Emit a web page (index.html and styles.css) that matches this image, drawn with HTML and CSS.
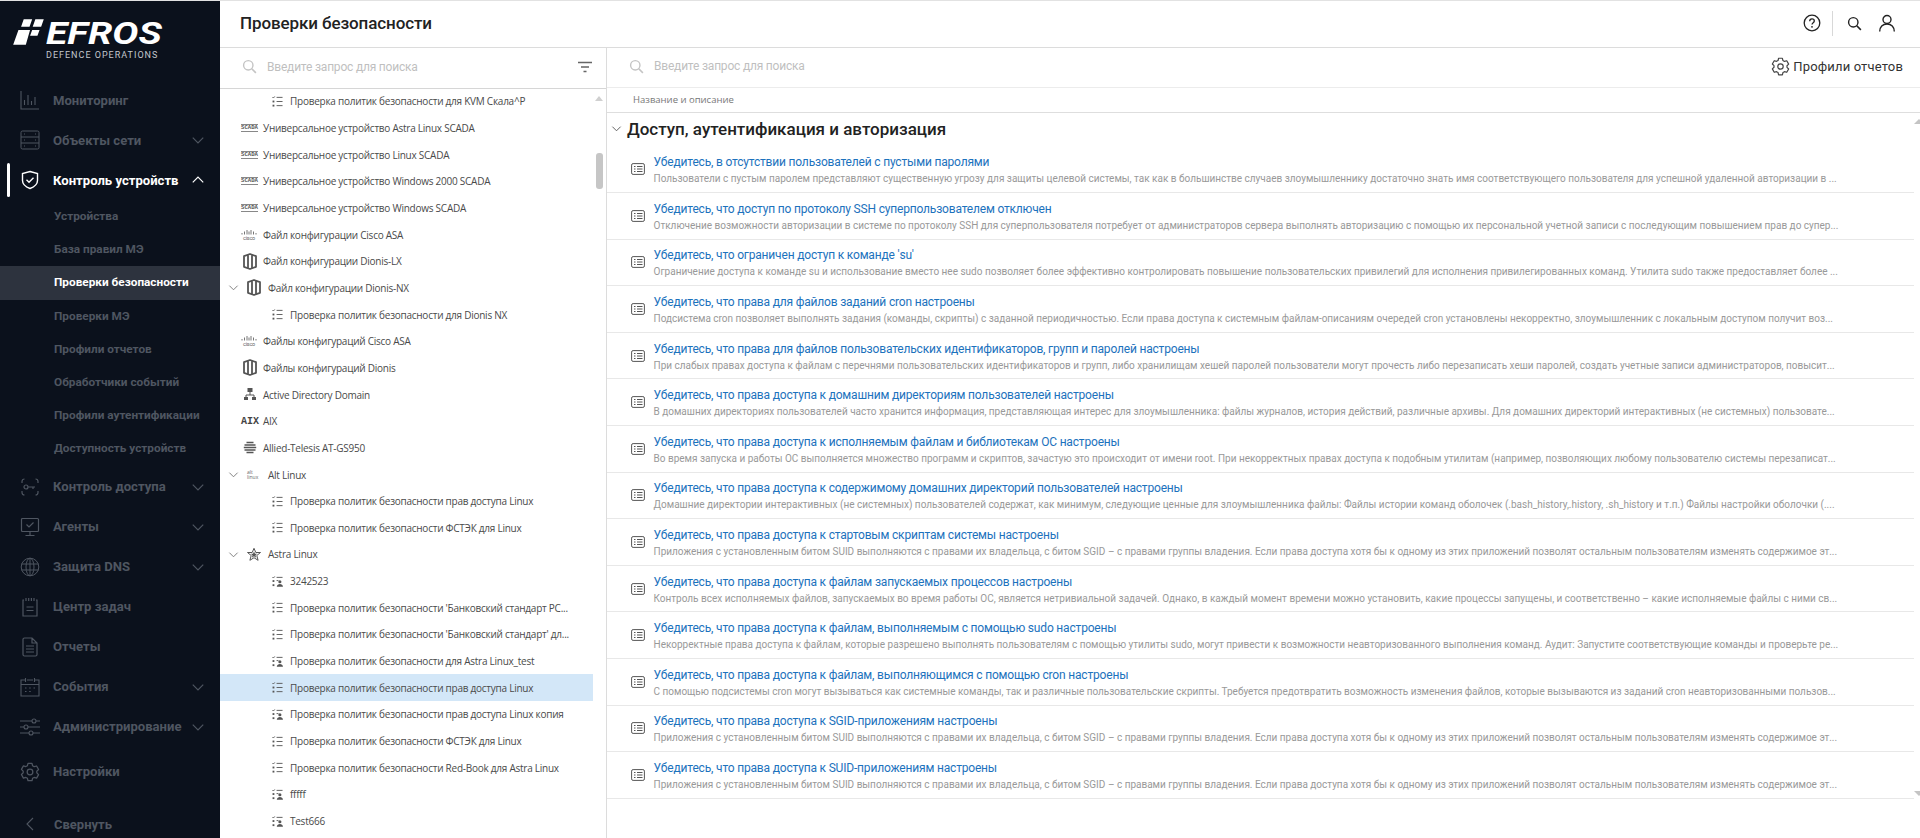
FILE: index.html
```html
<!DOCTYPE html>
<html lang="ru">
<head>
    <meta charset="UTF-8">
    <title>Проверки безопасности</title>
    <link rel="stylesheet" href="styles.css">
</head>
<body>
    <svg class="sprite" xmlns="http://www.w3.org/2000/svg">
        <symbol id="chev-down" viewBox="0 0 12 12"><path d="M1.5 4 6 8.5 10.5 4" fill="none" stroke="currentColor" stroke-width="1"/></symbol>
        <symbol id="list" viewBox="0 0 12 12"><g fill="none" stroke="currentColor" stroke-width="1"><path d="M5 1.5h6.5M5 6h6.5M5 10.5h6.5"/><path d="M.5 1.2 1.5 2.2 3 .5"/></g><rect x=".6" y="5" width="2" height="2" fill="currentColor"/><rect x=".6" y="9.5" width="2" height="2" fill="currentColor"/></symbol>
        <symbol id="list-user" viewBox="0 0 12 12"><g fill="none" stroke="currentColor" stroke-width="1"><path d="M5 1.5h6.5M5 5h2"/><path d="M.5 1.2 1.5 2.2 3 .5"/></g><rect x=".6" y="4.5" width="2" height="2" fill="currentColor"/><rect x=".6" y="9" width="2" height="2" fill="currentColor"/><circle cx="8.6" cy="6.3" r="1.7" fill="currentColor"/><path d="M5.2 11.8c.3-2.4 1.6-3.2 3.4-3.2s3.1.8 3.4 3.2z" fill="currentColor"/></symbol>
        <symbol id="dionis" viewBox="0 0 14 17"><path d="M1 3.2 7 1l6 2.200v10.600L7 16l-6-2.200zM5 2v13M9 2v13" fill="none" stroke="currentColor" stroke-width="1.800" stroke-linejoin="round"/></symbol>
        <symbol id="cisco" viewBox="0 0 16 12"><path d="M1 4v1.500M3.500 2.500v3M6 1v4.500M8 2.500v3M10 1v4.500M12.500 2.500v3M15 4v1.500" stroke="currentColor" stroke-width=".9"/><text x="8" y="11" text-anchor="middle" font-size="5.5" fill="currentColor" font-family="Roboto, sans-serif">cisco</text></symbol>
        <symbol id="doc-row" viewBox="0 0 14 14"><rect x=".6" y="1.6" width="12.8" height="10.8" rx="1.5" fill="none" stroke="currentColor"/><path d="M3 4.500h1.500M3 7h1.500M3 9.500h1.500M6 4.500h5.500M6 7h5.500M6 9.500h5.500" stroke="currentColor"/></symbol>
        <symbol id="search" viewBox="0 0 16 16"><circle cx="6.7" cy="6.7" r="5" fill="none" stroke="currentColor" stroke-width="1.5"/><path d="m10.4 10.4 4.4 4.4" stroke="currentColor" stroke-width="1.7"/></symbol>
        <symbol id="gear" viewBox="0 0 24 24"><g fill="none" stroke="currentColor" stroke-width="1.5" stroke-linejoin="round"><path d="M9.600 2.600h4.800l.7 2.900 1.900 1.100 2.900-.8 2.400 4.200-2.100 2v2.100l2.100 2-2.400 4.200-2.900-.8-1.900 1.100-.7 2.900H9.600l-.7-2.900-1.900-1.100-2.900.8L1.700 16l2.100-2v-2.100l-2.100-2 2.400-4.200 2.900.8 1.900-1.100z" transform="translate(0 -1)"/><circle cx="12" cy="12" r="3.400"/></g></symbol>
    </svg>

    <aside class="sidebar">
        <div class="logo">
            <svg class="logo-mark" viewBox="0 0 36 28"><path d="M3 26 8 12h11l-4 14zM13 2h8l-2.500 7h-8zM24 2h8l-2.500 7h-8zM21 12h7l-2 5.500h-7z" fill="#fff"/></svg>
            <div class="logo-name">EFROS</div>
            <div class="logo-sub">DEFENCE OPERATIONS</div>
        </div>
        <nav class="nav">
            <div class="nav-item">
                <svg class="nav-icon" viewBox="0 0 20 20"><path d="M1 1v18h18M4.500 15V10M8 15V5M11.500 15v-4M15 15V7" fill="none" stroke="currentColor" stroke-width="1.100"/></svg>
                <span>Мониторинг</span>
            </div>
            <div class="nav-item">
                <svg class="nav-icon" viewBox="0 0 20 20"><rect x="1" y="1" width="18" height="18" rx="1.500" fill="none" stroke="currentColor"/><path d="M1 7h18M1 13h18M4 4h1M15 4h1M4 10h1M15 10h1M4 16h1M15 16h1" stroke="currentColor"/></svg>
                <span>Объекты сети</span>
                <svg class="nav-chev"><use href="#chev-down"/></svg>
            </div>
            <div class="nav-item active">
                <svg class="nav-icon" viewBox="0 0 20 20"><path d="M10 1.500 17.500 3.500v7c0 4-3.500 6.500-7.500 8-4-1.500-7.500-4-7.500-8v-7z" fill="none" stroke="currentColor" stroke-width="1.400"/><path d="m6.500 9.800 2.500 2.400 4.500-4.400" fill="none" stroke="currentColor" stroke-width="1.400"/></svg>
                <span>Контроль устройств</span>
                <svg class="nav-chev flip"><use href="#chev-down"/></svg>
            </div>
            <div class="sub-list">
                <div class="sub-item">Устройства</div>
                <div class="sub-item">База правил МЭ</div>
                <div class="sub-item current">Проверки безопасности</div>
                <div class="sub-item">Проверки МЭ</div>
                <div class="sub-item">Профили отчетов</div>
                <div class="sub-item">Обработчики событий</div>
                <div class="sub-item">Профили аутентификации</div>
                <div class="sub-item">Доступность устройств</div>
            </div>
            <div class="nav-item">
                <svg class="nav-icon" viewBox="0 0 20 20"><path d="M2 6V4.500A2.500 2.500 0 0 1 4.500 2M15.500 2A2.500 2.500 0 0 1 18 4.500V6M18 14v1.500a2.500 2.500 0 0 1-2.500 2.500M4.500 18A2.500 2.500 0 0 1 2 15.500V14M8.200 10H15M13 10v2" fill="none" stroke="currentColor" stroke-width="1.200"/><circle cx="6" cy="10" r="2" fill="none" stroke="currentColor" stroke-width="1.200"/></svg>
                <span>Контроль доступа</span>
                <svg class="nav-chev"><use href="#chev-down"/></svg>
            </div>
            <div class="nav-item">
                <svg class="nav-icon" viewBox="0 0 20 20"><rect x="1.500" y="1.500" width="17" height="13" rx="1" fill="none" stroke="currentColor" stroke-width="1.200"/><path d="m6.500 7.500 2.500 2.500 4.500-4.500M10 14.500v4M5.500 18.500h9" fill="none" stroke="currentColor" stroke-width="1.200"/></svg>
                <span>Агенты</span>
                <svg class="nav-chev"><use href="#chev-down"/></svg>
            </div>
            <div class="nav-item">
                <svg class="nav-icon" viewBox="0 0 20 20"><g fill="none" stroke="currentColor" stroke-width="1"><circle cx="10" cy="10" r="8.800"/><ellipse cx="10" cy="10" rx="4" ry="8.800"/><path d="M1.500 7h17M1.500 13h17M10 1.200v17.600"/></g></svg>
                <span>Защита DNS</span>
                <svg class="nav-chev"><use href="#chev-down"/></svg>
            </div>
            <div class="nav-item">
                <svg class="nav-icon" viewBox="0 0 20 20"><path d="M4 3H3v16h14V3h-1M6 1v3M8.700 1v3M11.400 1v3M14 1v3M6.500 10h7M6.500 13.500h7" fill="none" stroke="currentColor" stroke-width="1.200"/></svg>
                <span>Центр задач</span>
            </div>
            <div class="nav-item">
                <svg class="nav-icon" viewBox="0 0 20 20"><path d="M3 2.500A1.500 1.500 0 0 1 4.500 1H12l5 5v11.500a1.500 1.500 0 0 1-1.500 1.500h-11A1.500 1.500 0 0 1 3 17.500zM12 1v5h5M6 9h8M6 12h8M6 15h8" fill="none" stroke="currentColor" stroke-width="1.200"/></svg>
                <span>Отчеты</span>
            </div>
            <div class="nav-item">
                <svg class="nav-icon" viewBox="0 0 20 20"><path d="M5 3H1v16h18V3h-4M7 3h6M5.500 1v4M14.500 1v4M1 7.500h18M5 11h1.500M9.200 11h1.500M13.500 11H15M5 14.500h1.500M9.200 14.500h1.500" fill="none" stroke="currentColor" stroke-width="1.100"/></svg>
                <span>События</span>
                <svg class="nav-chev"><use href="#chev-down"/></svg>
            </div>
            <div class="nav-item">
                <svg class="nav-icon" viewBox="0 0 20 20"><g fill="none" stroke="currentColor" stroke-width="1.100"><path d="M0 4h12M16 4h4M0 10h4M8 10h12M0 16h9M13 16h7"/><circle cx="14" cy="4" r="2"/><circle cx="6" cy="10" r="2"/><circle cx="11" cy="16" r="2"/></g></svg>
                <span>Администрирование</span>
                <svg class="nav-chev"><use href="#chev-down"/></svg>
            </div>
            <div class="nav-item settings">
                <svg class="nav-icon"><use href="#gear"/></svg>
                <span>Настройки</span>
            </div>
        </nav>
        <div class="collapse">
            <svg class="collapse-icon" viewBox="0 0 8 14"><path d="M7 1 1 7l6 6" fill="none" stroke="currentColor" stroke-width="1.100"/></svg>
            <span>Свернуть</span>
        </div>
    </aside>

    <div class="main">
        <header class="topbar">
            <h1>Проверки безопасности</h1>
            <div class="top-icons">
                <svg class="top-help" viewBox="0 0 18 18"><circle cx="9" cy="9" r="7.800" fill="none" stroke="currentColor" stroke-width="1.300"/><path d="M6.700 7.200c0-1.400 1-2.300 2.300-2.300s2.300.9 2.300 2.100c0 1.800-2.300 1.700-2.300 3.600" fill="none" stroke="currentColor" stroke-width="1.300"/><circle cx="9" cy="12.800" r=".9" fill="currentColor"/></svg>
                <div class="top-sep"></div>
                <svg class="top-search"><use href="#search"/></svg>
                <svg class="top-user" viewBox="0 0 18 18"><circle cx="9" cy="5.500" r="4" fill="none" stroke="currentColor" stroke-width="1.400"/><path d="M1.700 17.500c0-4.400 3-7.500 7.300-7.500s7.300 3.100 7.300 7.500" fill="none" stroke="currentColor" stroke-width="1.400"/></svg>
            </div>
        </header>
        <div class="panels">
            <section class="tree-panel">
                <div class="search-bar tree-search">
                    <svg class="search-icon"><use href="#search"/></svg>
                    <span class="placeholder">Введите запрос для поиска</span>
                    <svg class="filter-icon" viewBox="0 0 16 12"><path d="M1 1.500h14M4 6h8M6.500 10.500h3" stroke="currentColor" stroke-width="1.500"/></svg>
                </div>
                <div class="tree">
                    <div class="row lvl1"><svg class="ic"><use href="#list"/></svg>Проверка политик безопасности для KVM Скала^P</div>
                    <div class="row"><span class="scada">SCADA</span>Универсальное устройство Astra Linux SCADA</div>
                    <div class="row"><span class="scada">SCADA</span>Универсальное устройство Linux SCADA</div>
                    <div class="row"><span class="scada">SCADA</span>Универсальное устройство Windows 2000 SCADA</div>
                    <div class="row"><span class="scada">SCADA</span>Универсальное устройство Windows SCADA</div>
                    <div class="row"><svg class="ic-cisco"><use href="#cisco"/></svg>Файл конфигурации Cisco ASA</div>
                    <div class="row"><svg class="ic-root"><use href="#dionis"/></svg>Файл конфигурации Dionis-LX</div>
                    <div class="row open"><svg class="tw"><use href="#chev-down"/></svg><svg class="ic-root"><use href="#dionis"/></svg>Файл конфигурации Dionis-NX</div>
                    <div class="row lvl1"><svg class="ic"><use href="#list"/></svg>Проверка политик безопасности для Dionis NX</div>
                    <div class="row"><svg class="ic-cisco"><use href="#cisco"/></svg>Файлы конфигураций Cisco ASA</div>
                    <div class="row"><svg class="ic-root"><use href="#dionis"/></svg>Файлы конфигураций Dionis</div>
                    <div class="row"><svg class="ic-root" viewBox="0 0 14 17"><path d="M4.500 2h5v4h-5zM1 11h4v3H1zM9 11h4v3H9z" fill="currentColor"/><path d="M7 6v3M3 11V9h8v2" fill="none" stroke="currentColor"/></svg>Active Directory Domain</div>
                    <div class="row"><span class="aix">AIX</span>AIX</div>
                    <div class="row"><svg class="ic-root" viewBox="0 0 14 17"><path d="M3.500 3.500h7M1.500 6h11M.8 8.500h12.400M1.500 11h11M3.500 13.500h7" stroke="currentColor" stroke-width="1.600"/></svg>Allied-Telesis AT-GS950</div>
                    <div class="row open"><svg class="tw"><use href="#chev-down"/></svg><span class="alt">alt<br>linux</span>Alt Linux</div>
                    <div class="row lvl1"><svg class="ic"><use href="#list"/></svg>Проверка политик безопасности прав доступа Linux</div>
                    <div class="row lvl1"><svg class="ic"><use href="#list"/></svg>Проверка политик безопасности ФСТЭК для Linux</div>
                    <div class="row open"><svg class="tw"><use href="#chev-down"/></svg><svg class="ic-root" viewBox="0 0 14 17"><path d="M7 2.300 8.800 6.500h4.700L9.800 9.500l1.300 4.800L7 11.700l-4.100 2.600 1.300-4.800L.5 6.500h4.700z" fill="none" stroke="currentColor"/><path d="M7 5.500 8 7.700h2.300L8.500 9.300l.6 2.400L7 10.300l-2.100 1.400.6-2.400-1.800-1.600H6z" fill="currentColor"/></svg>Astra Linux</div>
                    <div class="row lvl1"><svg class="ic"><use href="#list-user"/></svg>3242523</div>
                    <div class="row lvl1"><svg class="ic"><use href="#list"/></svg>Проверка политик безопасности 'Банковский стандарт РС...</div>
                    <div class="row lvl1"><svg class="ic"><use href="#list"/></svg>Проверка политик безопасности 'Банковский стандарт' дл...</div>
                    <div class="row lvl1"><svg class="ic"><use href="#list-user"/></svg>Проверка политик безопасности для Astra Linux_test</div>
                    <div class="row lvl1 selected"><svg class="ic"><use href="#list"/></svg>Проверка политик безопасности прав доступа Linux</div>
                    <div class="row lvl1"><svg class="ic"><use href="#list-user"/></svg>Проверка политик безопасности прав доступа Linux копия</div>
                    <div class="row lvl1"><svg class="ic"><use href="#list"/></svg>Проверка политик безопасности ФСТЭК для Linux</div>
                    <div class="row lvl1"><svg class="ic"><use href="#list"/></svg>Проверка политик безопасности Red-Book для Astra Linux</div>
                    <div class="row lvl1"><svg class="ic"><use href="#list-user"/></svg>fffff</div>
                    <div class="row lvl1"><svg class="ic"><use href="#list-user"/></svg>Test666</div>
                </div>
                <div class="tree-arrow"></div>
                <div class="tree-thumb"></div>
            </section>
            <section class="list-panel">
                <div class="search-bar list-search">
                    <svg class="search-icon"><use href="#search"/></svg>
                    <span class="placeholder">Введите запрос для поиска</span>
                    <div class="profiles"><svg class="profiles-icon"><use href="#gear"/></svg>Профили отчетов</div>
                </div>
                <div class="table-head">Название и описание</div>
                <div class="checks">
                    <div class="group-title"><svg class="group-chev"><use href="#chev-down"/></svg>Доступ, аутентификация и авторизация</div>
                    <div class="check">
                        <svg class="check-icon"><use href="#doc-row"/></svg>
                        <div class="check-body">
                            <a class="check-title">Убедитесь, в отсутствии пользователей с пустыми паролями</a>
                            <p class="check-desc">Пользователи с пустым паролем представляют существенную угрозу для защиты целевой системы, так как в большинстве случаев злоумышленнику достаточно знать имя соответствующего пользователя для успешной удаленной авторизации в ...</p>
                        </div>
                    </div>
                    <div class="check">
                        <svg class="check-icon"><use href="#doc-row"/></svg>
                        <div class="check-body">
                            <a class="check-title">Убедитесь, что доступ по протоколу SSH суперпользователем отключен</a>
                            <p class="check-desc">Отключение возможности авторизации в системе по протоколу SSH для суперпользователя потребует от администраторов сервера выполнять авторизацию с помощью их персональной учетной записи с последующим повышением прав до супер...</p>
                        </div>
                    </div>
                    <div class="check">
                        <svg class="check-icon"><use href="#doc-row"/></svg>
                        <div class="check-body">
                            <a class="check-title">Убедитесь, что ограничен доступ к команде 'su'</a>
                            <p class="check-desc">Ограничение доступа к команде su и использование вместо нее sudo позволяет более эффективно контролировать повышение пользовательских привилегий для исполнения привилегированных команд. Утилита sudo также предоставляет более ...</p>
                        </div>
                    </div>
                    <div class="check">
                        <svg class="check-icon"><use href="#doc-row"/></svg>
                        <div class="check-body">
                            <a class="check-title">Убедитесь, что права для файлов заданий cron настроены</a>
                            <p class="check-desc">Подсистема cron позволяет выполнять задания (команды, скрипты) с заданной периодичностью. Если права доступа к системным файлам-описаниям очередей cron установлены некорректно, злоумышленник с локальным доступом получит воз...</p>
                        </div>
                    </div>
                    <div class="check">
                        <svg class="check-icon"><use href="#doc-row"/></svg>
                        <div class="check-body">
                            <a class="check-title">Убедитесь, что права для файлов пользовательских идентификаторов, групп и паролей настроены</a>
                            <p class="check-desc">При слабых правах доступа к файлам с перечнями пользовательских идентификаторов и групп, либо хранилищам хешей паролей пользователи могут прочесть либо перезаписать хеши паролей, создать учетные записи администраторов, повысит...</p>
                        </div>
                    </div>
                    <div class="check">
                        <svg class="check-icon"><use href="#doc-row"/></svg>
                        <div class="check-body">
                            <a class="check-title">Убедитесь, что права доступа к домашним директориям пользователей настроены</a>
                            <p class="check-desc">В домашних директориях пользователей часто хранится информация, представляющая интерес для злоумышленника: файлы журналов, история действий, различные архивы. Для домашних директорий интерактивных (не системных) пользовате...</p>
                        </div>
                    </div>
                    <div class="check">
                        <svg class="check-icon"><use href="#doc-row"/></svg>
                        <div class="check-body">
                            <a class="check-title">Убедитесь, что права доступа к исполняемым файлам и библиотекам ОС настроены</a>
                            <p class="check-desc">Во время запуска и работы ОС выполняется множество программ и скриптов, зачастую это происходит от имени root. При некорректных правах доступа к подобным утилитам (например, позволяющих любому пользователю системы перезаписат...</p>
                        </div>
                    </div>
                    <div class="check">
                        <svg class="check-icon"><use href="#doc-row"/></svg>
                        <div class="check-body">
                            <a class="check-title">Убедитесь, что права доступа к содержимому домашних директорий пользователей настроены</a>
                            <p class="check-desc">Домашние директории интерактивных (не системных) пользователей содержат, как минимум, следующие ценные для злоумышленника файлы: Файлы истории команд оболочек (.bash_history,.history, .sh_history и т.п.) Файлы настройки оболочки (....</p>
                        </div>
                    </div>
                    <div class="check">
                        <svg class="check-icon"><use href="#doc-row"/></svg>
                        <div class="check-body">
                            <a class="check-title">Убедитесь, что права доступа к стартовым скриптам системы настроены</a>
                            <p class="check-desc">Приложения с установленным битом SUID выполняются с правами их владельца, с битом SGID – с правами группы владения. Если права доступа хотя бы к одному из этих приложений позволят остальным пользователям изменять содержимое эт...</p>
                        </div>
                    </div>
                    <div class="check">
                        <svg class="check-icon"><use href="#doc-row"/></svg>
                        <div class="check-body">
                            <a class="check-title">Убедитесь, что права доступа к файлам запускаемых процессов настроены</a>
                            <p class="check-desc">Контроль всех исполняемых файлов, запускаемых во время работы ОС, является нетривиальной задачей. Однако, в каждый момент времени можно установить, какие процессы запущены, и соответственно – какие исполняемые файлы с ними св...</p>
                        </div>
                    </div>
                    <div class="check">
                        <svg class="check-icon"><use href="#doc-row"/></svg>
                        <div class="check-body">
                            <a class="check-title">Убедитесь, что права доступа к файлам, выполняемым с помощью sudo настроены</a>
                            <p class="check-desc">Некорректные права доступа к файлам, которые разрешено выполнять пользователям с помощью утилиты sudo, могут привести к возможности неавторизованного выполнения команд. Аудит: Запустите соответствующие команды и проверьте ре...</p>
                        </div>
                    </div>
                    <div class="check">
                        <svg class="check-icon"><use href="#doc-row"/></svg>
                        <div class="check-body">
                            <a class="check-title">Убедитесь, что права доступа к файлам, выполняющимся с помощью cron настроены</a>
                            <p class="check-desc">С помощью подсистемы cron могут вызываться как системные команды, так и различные пользовательские скрипты. Требуется предотвратить возможность изменения файлов, которые вызываются из заданий cron неавторизованными пользов...</p>
                        </div>
                    </div>
                    <div class="check">
                        <svg class="check-icon"><use href="#doc-row"/></svg>
                        <div class="check-body">
                            <a class="check-title">Убедитесь, что права доступа к SGID-приложениям настроены</a>
                            <p class="check-desc">Приложения с установленным битом SUID выполняются с правами их владельца, с битом SGID – с правами группы владения. Если права доступа хотя бы к одному из этих приложений позволят остальным пользователям изменять содержимое эт...</p>
                        </div>
                    </div>
                    <div class="check">
                        <svg class="check-icon"><use href="#doc-row"/></svg>
                        <div class="check-body">
                            <a class="check-title">Убедитесь, что права доступа к SUID-приложениям настроены</a>
                            <p class="check-desc">Приложения с установленным битом SUID выполняются с правами их владельца, с битом SGID – с правами группы владения. Если права доступа хотя бы к одному из этих приложений позволят остальным пользователям изменять содержимое эт...</p>
                        </div>
                    </div>
                </div>
                <div class="list-arrow up"></div>
                <div class="list-arrow down"></div>
            </section>
        </div>
    </div>
</body>
</html>
```

FILE: styles.css
```css
* {
    box-sizing: border-box;
}
html, body {
    height: 100%;
}
body {
    margin: 0;
    display: flex;
    overflow: hidden;
    font-family: Roboto, sans-serif;
    color: #222;
    background-color: #fff;
}
.sprite {
    display: none;
}

/* Sidebar */
.sidebar {
    position: relative;
    width: 220px;
    flex-shrink: 0;
    background-color: #0b111c;
    color: #4f5661;
    border-top: 1px solid #e2e2e2;
}
.logo {
    height: 78px;
    padding: 18px 0 0 46px;
    position: relative;
    color: #fff;
}
.logo-mark {
    position: absolute;
    left: 10px;
    top: 16px;
    width: 38px;
    height: 30px;
}
.logo-name {
    font-size: 32px;
    line-height: 28px;
    font-weight: 700;
    font-style: italic;
    transform: scaleX(1.22);
    transform-origin: left center;
}
.logo-sub {
    font-size: 9px;
    line-height: 12px;
    margin-top: 2px;
    letter-spacing: 1px;
    color: #c4c7cc;
}
.nav {
    padding-top: 1px;
}
.nav-item {
    display: flex;
    align-items: center;
    height: 40px;
    padding-left: 20px;
    font-size: 13.1px;
    font-weight: 700;
    position: relative;
}
.nav-item span {
    margin-left: 13px;
}
.nav-icon {
    width: 20px;
    height: 20px;
    flex-shrink: 0;
}
.nav-chev {
    position: absolute;
    left: 191px;
    top: 13px;
    width: 14px;
    height: 14px;
}
.nav-chev.flip {
    transform: rotate(180deg);
}
.nav-item.active {
    color: #fff;
}
.nav-item.active::before {
    content: "";
    position: absolute;
    left: 7px;
    top: 3px;
    width: 3px;
    height: 34px;
    border-radius: 2px;
    background-color: #fff;
}
.sub-list {
    padding-bottom: 1px;
}
.sub-item {
    height: 33.2px;
    line-height: 33.2px;
    padding-left: 54px;
    font-size: 11.8px;
    font-weight: 700;
}
.sub-item.current {
    background-color: #2d333e;
    color: #fff;
}
.settings {
    margin-top: 5px;
}
.collapse {
    position: absolute;
    left: 0;
    right: 0;
    bottom: 2px;
    height: 24px;
    display: flex;
    align-items: center;
    padding-left: 26px;
    font-size: 13px;
    font-weight: 700;
}
.collapse-icon {
    width: 8px;
    height: 14px;
    margin-right: 20px;
}

/* Top */
.main {
    flex: 1;
    min-width: 0;
    display: flex;
    flex-direction: column;
    border-top: 1px solid #e2e2e2;
}
.topbar {
    height: 47px;
    flex-shrink: 0;
    display: flex;
    align-items: center;
    justify-content: space-between;
    padding: 0 0 2px 20px;
    border-bottom: 1px solid #dcdcdc;
}
.topbar h1 {
    margin: 0;
    font-size: 17px;
    letter-spacing: -0.1px;
    font-weight: 500;
    color: #222;
}
.top-icons {
    display: flex;
    align-items: center;
    color: #222;
}
.top-help {
    width: 18px;
    height: 18px;
}
.top-sep {
    width: 1px;
    height: 25px;
    margin: 0 14px 0 11px;
    background-color: #d8d8d8;
}
.top-search {
    width: 15px;
    height: 15px;
    color: #222;
}
.top-user {
    width: 18px;
    height: 18px;
    margin: 0 24px 0 16px;
}

.panels {
    flex: 1;
    min-height: 0;
    display: flex;
}

/* Search bars */
.search-bar {
    height: 41px;
    display: flex;
    align-items: center;
    padding-bottom: 3px;
    color: #bbb;
}
.search-icon {
    width: 15px;
    height: 15px;
    flex-shrink: 0;
    color: #c4c4c4;
}
.placeholder {
    margin-left: 10px;
    font-size: 12px;
    letter-spacing: -0.2px;
    color: #bfbfbf;
}

/* Tree */
.tree-panel {
    position: relative;
    width: 387px;
    flex-shrink: 0;
    display: flex;
    flex-direction: column;
    overflow: hidden;
    border-right: 1px solid #dcdcdc;
}
.tree-search {
    padding-left: 22px;
    border-bottom: 1px solid #d6d6d6;
    flex-shrink: 0;
}
.filter-icon {
    width: 16px;
    height: 12px;
    margin-left: auto;
    margin-right: 13px;
    color: #666;
}
.tree {
    margin-top: -1px;
    width: 373px;
}
.row {
    display: flex;
    align-items: center;
    height: 26.67px;
    padding-left: 21px;
    font-family: "Open Sans", sans-serif;
    font-size: 10px;
    letter-spacing: -0.25px;
    color: #4a4a4a;
    white-space: nowrap;
}
.row.open {
    padding-left: 8px;
}
.row.lvl1 {
    padding-left: 52px;
}
.row.selected {
    background-color: #d3e7f8;
}
.ic {
    width: 11px;
    height: 11px;
    margin-right: 7px;
    flex-shrink: 0;
    color: #555;
}
.ic-root {
    width: 14px;
    height: 17px;
    margin: 0 6px 0 2px;
    flex-shrink: 0;
    color: #555;
}
.ic-cisco {
    width: 16px;
    height: 12px;
    margin-right: 6px;
    flex-shrink: 0;
    color: #666;
}
.tw {
    width: 11px;
    height: 11px;
    margin-right: 8px;
    color: #777;
    flex-shrink: 0;
}
.row.open .ic-root {
    margin: 0 7px 0 0;
}
.scada {
    width: 17px;
    margin-right: 5px;
    flex-shrink: 0;
    font-family: "Liberation Mono", monospace;
    font-size: 5.6px;
    line-height: 6px;
    letter-spacing: 0;
    font-weight: 700;
    text-align: center;
    color: #555;
    border-top: 1px solid #888;
    border-bottom: 1px solid #888;
}
.aix {
    width: 17px;
    margin-right: 5px;
    flex-shrink: 0;
    font-family: "Liberation Mono", monospace;
    font-size: 10px;
    letter-spacing: 0;
    font-weight: 700;
    color: #444;
}
.alt {
    width: 14px;
    margin-right: 7px;
    flex-shrink: 0;
    font-size: 5px;
    line-height: 5px;
    letter-spacing: 0;
    color: #666;
}
.tree-arrow {
    position: absolute;
    left: 375px;
    top: 48px;
    width: 0;
    height: 0;
    border-left: 4px solid transparent;
    border-right: 4px solid transparent;
    border-bottom: 5px solid #d0d0d0;
}
.tree-thumb {
    position: absolute;
    left: 376px;
    top: 105px;
    width: 7px;
    height: 36px;
    border-radius: 3px;
    background-color: #c6c6c6;
}

/* Right list */
.list-panel {
    position: relative;
    flex: 1;
    min-width: 0;
    overflow: hidden;
}
.list-search {
    height: 40px;
    padding-left: 22px;
    border-bottom: 1px solid #ececec;
}
.profiles {
    margin-left: auto;
    margin-right: 17px;
    display: flex;
    align-items: center;
    font-size: 13px;
    letter-spacing: 0.15px;
    color: #333;
}
.profiles-icon {
    width: 19px;
    height: 19px;
    margin-right: 3px;
    color: #444;
}
.table-head {
    height: 25px;
    line-height: 24px;
    padding-left: 26px;
    font-family: "Open Sans", sans-serif;
    font-size: 9.5px;
    color: #777;
    border-bottom: 1px solid #dedede;
}
.checks {
    padding-right: 6px;
}
.group-title {
    display: flex;
    align-items: center;
    height: 33.5px;
    padding: 0 0 2px 4px;
    font-size: 17px;
    font-weight: 500;
    color: #222;
}
.group-chev {
    width: 11px;
    height: 11px;
    margin-right: 5px;
    color: #555;
}
.check {
    display: flex;
    align-items: center;
    height: 46.6px;
    padding-left: 24px;
    border-bottom: 1px solid #e8e8e8;
}
.check-icon {
    width: 14px;
    height: 14px;
    margin-right: 8.5px;
    flex-shrink: 0;
    color: #555;
}
.check-body {
    min-width: 0;
    padding-top: 2px;
}
.check-title {
    display: block;
    font-size: 12px;
    letter-spacing: -0.18px;
    line-height: 17px;
    color: #1c72bd;
}
.check-desc {
    margin: 1px 0 0;
    font-size: 10px;
    line-height: 14px;
    color: #999;
    white-space: nowrap;
}
.list-arrow {
    position: absolute;
    right: -4px;
    width: 0;
    height: 0;
    border-left: 5px solid transparent;
    border-right: 5px solid transparent;
}
.list-arrow.up {
    top: 71px;
    border-bottom: 5px solid #c4c4c4;
}
.list-arrow.down {
    top: 743px;
    border-top: 5px solid #c4c4c4;
}
```
